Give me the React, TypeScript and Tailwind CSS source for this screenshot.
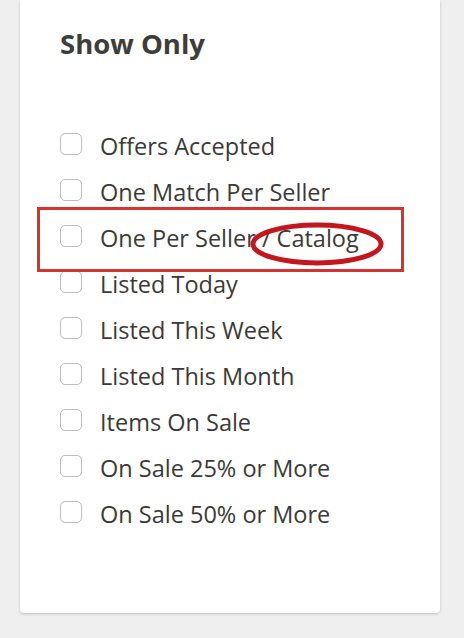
import React from 'react';

const options = [
  'Offers Accepted',
  'One Match Per Seller',
  'One Per Seller / Catalog',
  'Listed Today',
  'Listed This Week',
  'Listed This Month',
  'Items On Sale',
  'On Sale 25% or More',
  'On Sale 50% or More',
];

export default function App() {
  return (
    <div className="h-[638px] w-[464px] bg-[#efefef] pl-[20px] font-['Open_Sans',sans-serif]">
      <div className="relative h-[613px] w-[420px] rounded-b-[4px] bg-white shadow-[0_1px_3px_rgba(0,0,0,0.2)]">
        <h2 className="pl-[40px] pt-[24px] text-[27.5px] font-bold leading-[40px] text-[#3d3d3d]">Show Only</h2>
        <ul className="mt-[57px]">
          {options.map((label) => (
            <li key={label} className="flex h-[46px] items-center pl-[40px]">
              <span className="h-[22px] w-[22px] shrink-0 rounded-[5px] border border-[#bdbdbd] bg-white" />
              <span className="ml-[18px] pt-[5px] text-[23.5px] font-medium leading-none text-[#3a3a3a]">{label}</span>
            </li>
          ))}
        </ul>

        {/* highlight annotations */}
        <div className="absolute left-[17px] top-[207px] h-[65px] w-[367px] border-[3px] border-[#d63232]" />
        <svg className="absolute left-[229px] top-[221px]" width="136" height="46" viewBox="0 0 136 46">
          <ellipse cx="68" cy="23" rx="64" ry="19" fill="none" stroke="#c4161c" strokeWidth="5" />
        </svg>
      </div>
    </div>
  );
}
